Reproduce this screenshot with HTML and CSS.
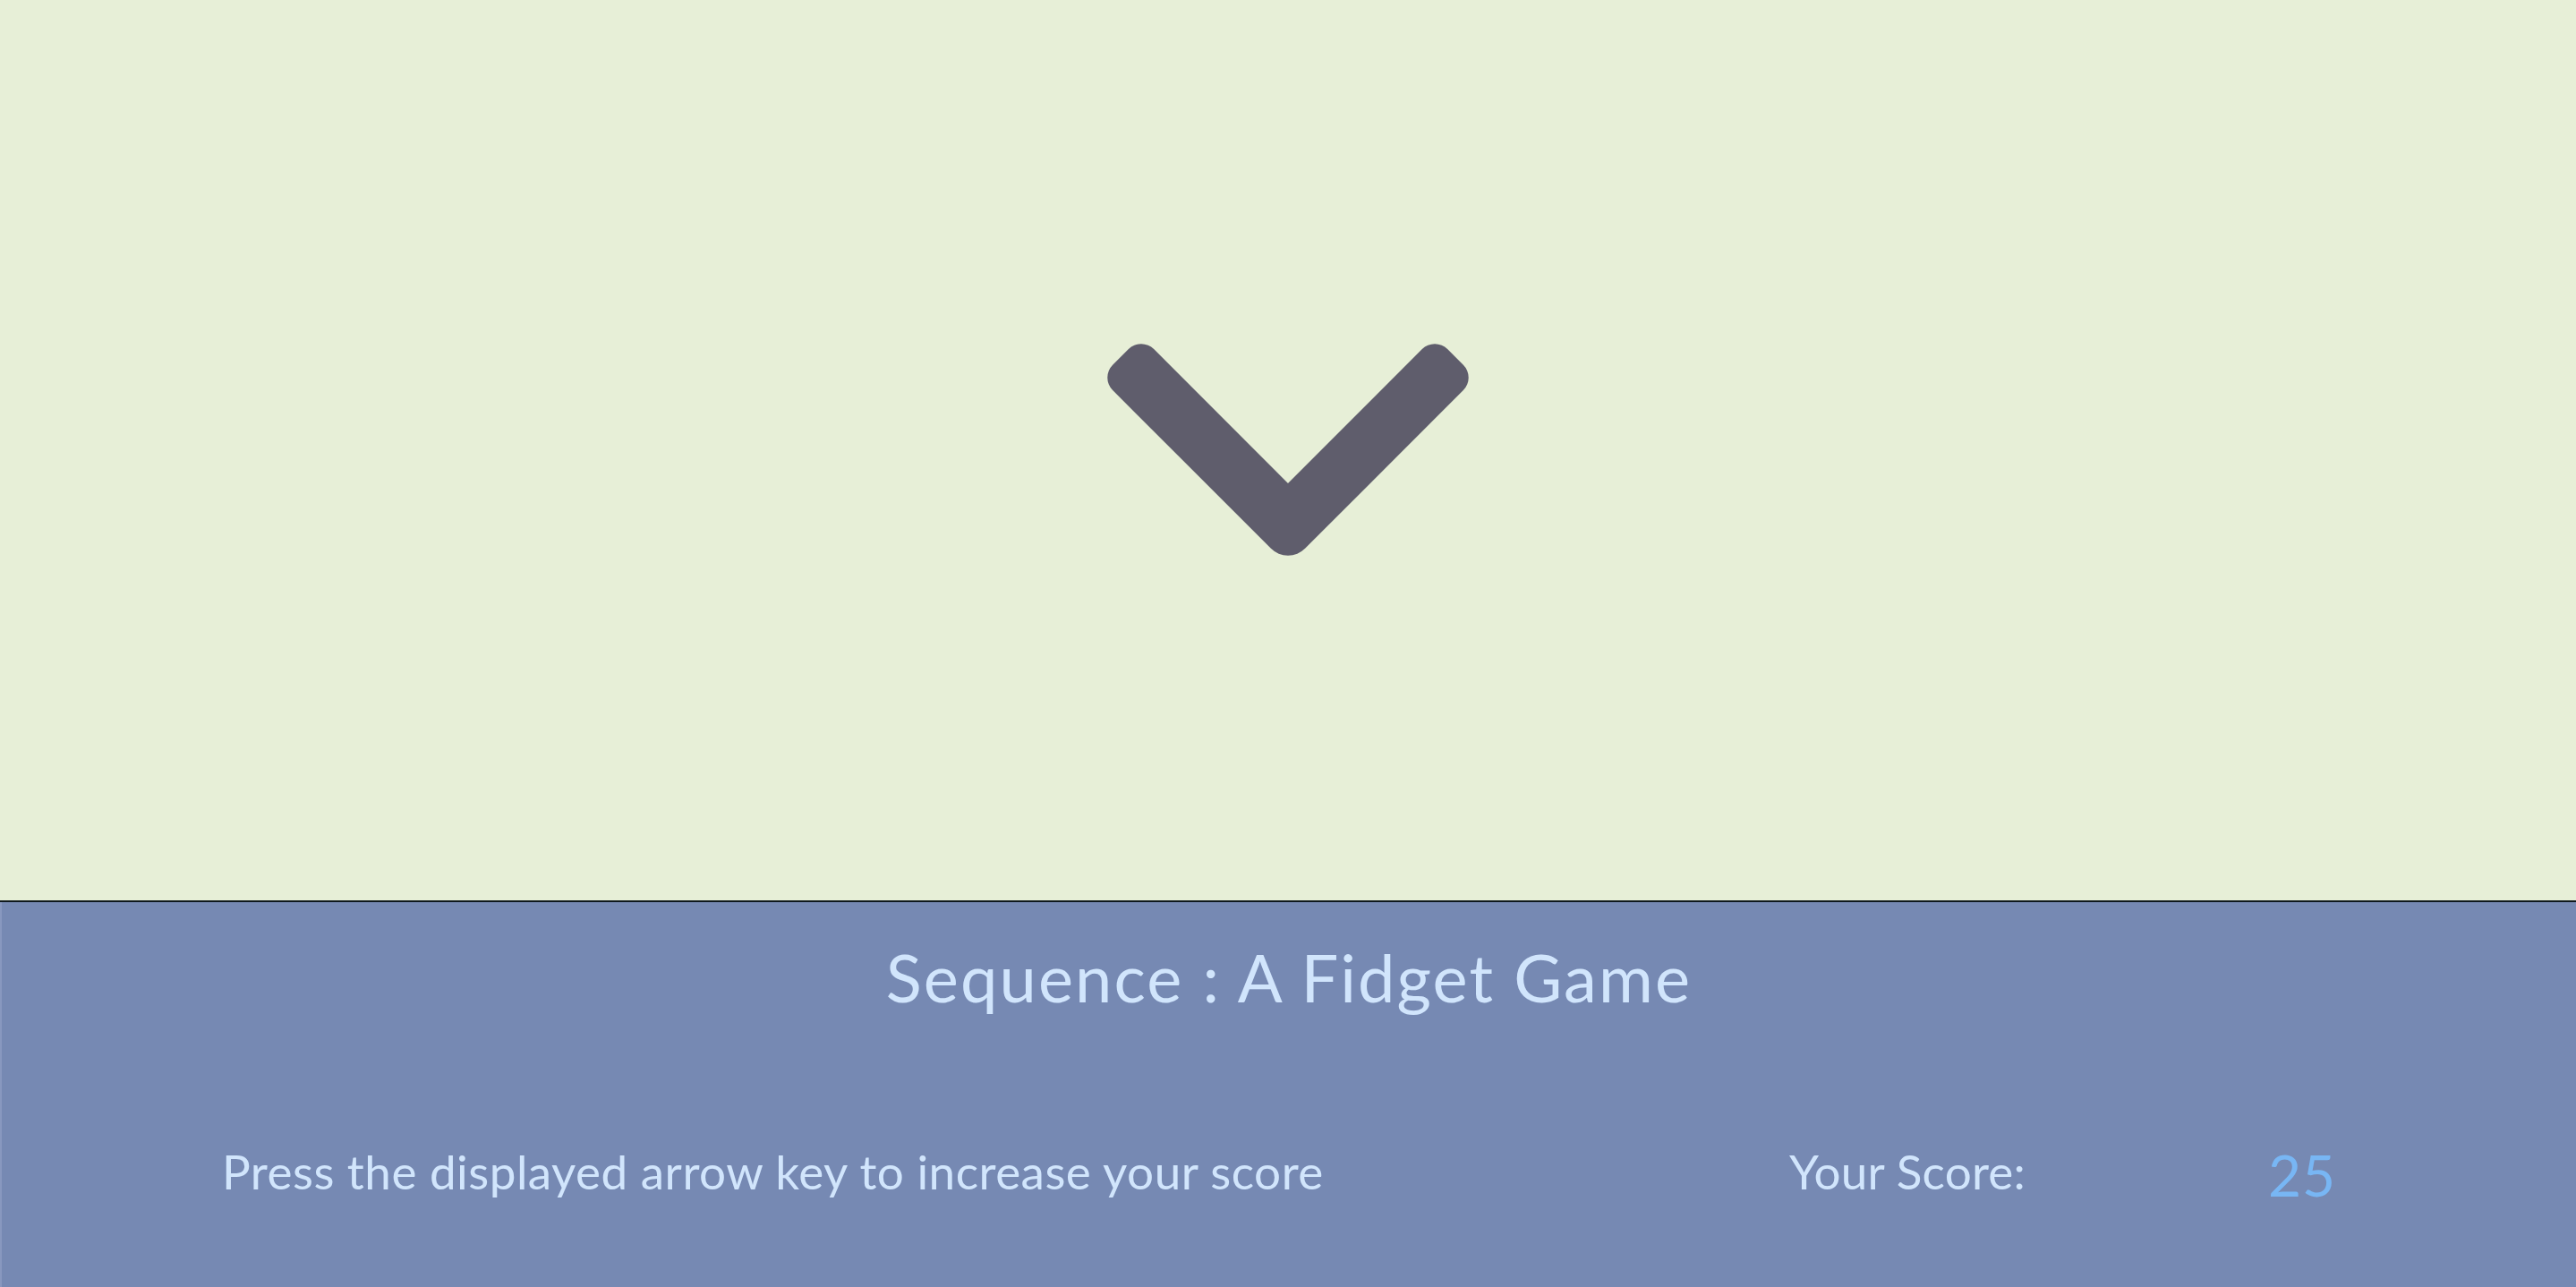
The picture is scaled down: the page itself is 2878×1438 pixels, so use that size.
FILE: index.html
```html
<!DOCTYPE html>
<html lang="en">
<head>
<meta charset="utf-8">
<title>Sequence : A Fidget Game</title>
<link rel="stylesheet" href="styles.css">
</head>
<body>
<main class="stage">
  <svg class="chevron" width="420" height="260" viewBox="0 0 420 260" aria-hidden="true">
    <path d="M210 165 L60.14 15.04 A20 20 0 0 0 31.86 15.04 L14.14 32.76 A20 20 0 0 0 14.14 61.04 L190.9 237.8 A27 27 0 0 0 229.1 237.8 L405.86 61.04 A20 20 0 0 0 405.86 32.76 L388.14 15.04 A20 20 0 0 0 359.86 15.04 Z"/>
  </svg>
</main>
<footer class="panel">
  <h1 class="title">Sequence : A Fidget Game</h1>
  <div class="info">
    <p class="hint">Press the displayed arrow key to increase your score</p>
    <p class="label">Your Score:</p>
    <p class="score">25</p>
  </div>
</footer>
</body>
</html>
```

FILE: styles.css
```css
html, body {
  margin: 0;
  padding: 0;
}
body {
  width: 2878px;
  height: 1438px;
  overflow: hidden;
  font-family: "Lato", "Liberation Sans", sans-serif;
  background: #7689b3;
}
.stage {
  box-sizing: border-box;
  height: 1008px;
  padding-top: 4px;
  background: #e7efd7;
  border-bottom: 2px solid #0f191d;
  display: flex;
  align-items: center;
  justify-content: center;
}
.chevron path {
  fill: #5f5d6c;
}
.panel {
  box-sizing: border-box;
  height: 430px;
  background: #7689b3;
  border-left: 2px solid #8898bf;
  padding-top: 47px;
  color: #d1e5fc;
}
.title {
  margin: 0;
  font-size: 74px;
  font-weight: 400;
  line-height: 1;
  letter-spacing: 2.1px;
  text-align: center;
}
.info {
  display: grid;
  grid-template-columns: 1751px 535px auto;
  padding-left: 246px;
  margin-top: 153px;
  align-items: start;
}
.info p {
  margin: 0;
  font-size: 53px;
  line-height: 1;
  white-space: nowrap;
}
.info .hint {
  letter-spacing: 0.48px;
}
.info .label {
  letter-spacing: 0.23px;
}
.info .score {
  font-size: 64px;
  margin-top: -1px;
  letter-spacing: 1px;
  color: #78b6f4;
}
```
